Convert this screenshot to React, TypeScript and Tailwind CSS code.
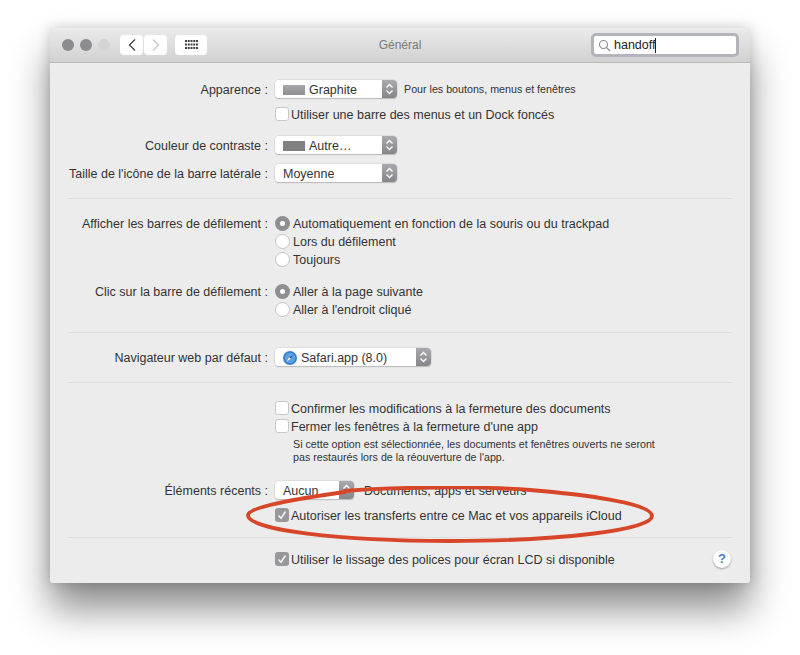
import type { ReactNode } from 'react';

function Row({ label, className = '', children }: { label?: string; className?: string; children: ReactNode }) {
  return (
    <div className={`flex h-[18px] items-center ${className}`}>
      <div className="w-[218px] shrink-0 pt-[2px] text-right whitespace-nowrap">{label}</div>
      <div className="ml-[7px] flex flex-1 items-center whitespace-nowrap">{children}</div>
    </div>
  );
}

function Divider({ className = '' }: { className?: string }) {
  return <div className={`mx-[18px] h-px bg-[#dddddd] ${className}`} />;
}

function Stepper({ upOnly }: { upOnly?: boolean }) {
  return (
    <span className="flex h-full w-[15px] items-center justify-center rounded-r-[4px] bg-gradient-to-b from-[#a9a9ad] to-[#87878b]">
      <svg width="9" height="14" viewBox="0 0 9 14" fill="none" stroke="#fff" strokeWidth="1.3">
        <path d="M1.5 5.5 4.5 2.5 7.5 5.5" />
        {!upOnly && <path d="M1.5 8.5 4.5 11.5 7.5 8.5" />}
      </svg>
    </span>
  );
}

function Select({ width, upOnly, children }: { width: string; upOnly?: boolean; children: ReactNode }) {
  return (
    <div className={`flex h-[18px] items-center justify-between rounded-[4px] bg-white shadow-[0_0_0_0.5px_#cfcfcf,0_1px_1px_rgba(0,0,0,0.3)] ${width}`}>
      <div className="flex items-center pt-[2px] pl-[8px]">{children}</div>
      <Stepper upOnly={upOnly} />
    </div>
  );
}

function Swatch({ color }: { color: string }) {
  return <span className={`mr-[4px] h-[10px] w-[22px] ${color}`} />;
}

function Checkbox({ checked, children, className = '' }: { checked?: boolean; children: ReactNode; className?: string }) {
  return (
    <div className={`flex items-center ${className}`}>
      {checked ? (
        <span className="flex h-[14px] w-[14px] items-center justify-center rounded-[3px] bg-[#98989c]">
          <svg width="10" height="10" viewBox="0 0 10 10" fill="none" stroke="#f2f2f2" strokeWidth="1.6">
            <path d="M1.5 5.5 4 8.2 8.5 1.5" />
          </svg>
        </span>
      ) : (
        <span className="h-[14px] w-[14px] rounded-[3px] border border-[#c8c8c8] bg-white" />
      )}
      <span className="ml-[2px] pt-[2px]">{children}</span>
    </div>
  );
}

function Radio({ checked, children }: { checked?: boolean; children: ReactNode }) {
  return (
    <div className="flex items-center">
      {checked ? (
        <span className="flex h-[15px] w-[15px] items-center justify-center rounded-full bg-[#8e8e93]">
          <span className="h-[5px] w-[5px] rounded-full bg-white" />
        </span>
      ) : (
        <span className="h-[15px] w-[15px] rounded-full border border-[#c4c4c4] bg-white" />
      )}
      <span className="ml-[3px] pt-[2px]">{children}</span>
    </div>
  );
}

function SafariIcon() {
  return (
    <svg width="14" height="14" viewBox="0 0 13 13" className="mr-[4px]">
      <circle cx="6.5" cy="6.5" r="6.5" fill="#3b7fcf" />
      <circle cx="6.5" cy="6.5" r="4.8" fill="#5aa2e6" />
      <path d="M9.5 3.5 7.3 7.3 3.5 9.5 5.7 5.7z" fill="#fff" />
      <path d="M9.5 3.5 7.3 7.3 5.7 5.7z" fill="#1f4f8f" />
    </svg>
  );
}

function TitleBar() {
  return (
    <div className="flex h-[35px] items-center border-b border-[#b9b9b9] bg-gradient-to-b from-[#ebebeb] to-[#d1d1d1] pl-[12px] pr-[11px]">
      <span className="h-[12px] w-[12px] rounded-full bg-[#8b8b90]" />
      <span className="ml-[6px] h-[12px] w-[12px] rounded-full bg-[#8b8b90]" />
      <span className="ml-[6px] h-[12px] w-[12px] rounded-full bg-[#d4d4d4]" />
      <div className="ml-[10px] flex h-[20px] w-[23px] items-center justify-center rounded-[4px] bg-white">
        <svg width="10" height="14" viewBox="0 0 10 14" fill="none" stroke="#444" strokeWidth="1.3">
          <path d="M8 1.5 2.5 7 8 12.5" />
        </svg>
      </div>
      <div className="ml-[1px] flex h-[20px] w-[23px] items-center justify-center rounded-[4px] bg-white">
        <svg width="10" height="14" viewBox="0 0 10 14" fill="none" stroke="#c8c8c8" strokeWidth="1.3">
          <path d="M2 1.5 7.5 7 2 12.5" />
        </svg>
      </div>
      <div className="ml-[8px] flex h-[20px] w-[32px] items-center justify-center rounded-[4px] bg-white">
        <svg width="13" height="10" viewBox="0 0 13 10" fill="#444">
          {[0, 2.75, 5.5, 8.25, 11].map((x) =>
            [0, 3.5, 7].map((y) => <rect key={`${x}-${y}`} x={x} y={y} width="2" height="2" />),
          )}
        </svg>
      </div>
      <div className="flex-1 pl-[2px] text-center text-[12px] text-[#7a7a7a]">Général</div>
      <div className="flex h-[24px] w-[148px] items-center rounded-[5px] border-[3px] border-[#b3b3ba] bg-white pl-[4px]">
        <svg width="13" height="13" viewBox="0 0 13 13" fill="none" stroke="#8a8a8a" strokeWidth="1.1">
          <circle cx="5.5" cy="5.5" r="4" />
          <path d="M8.5 8.5 12 12" />
        </svg>
        <span className="ml-[3px] text-[12.5px] text-[#222]">handoff</span>
        <span className="h-[15px] w-px bg-[#222]" />
      </div>
    </div>
  );
}

export default function App() {
  return (
    <div className="h-[655px] w-[800px] overflow-hidden bg-white pt-[28px] pl-[50px] font-['Liberation_Sans',Arial,sans-serif] text-[12.5px] text-[#333]">
      <div className="relative h-[555px] w-[700px] rounded-[3px] bg-[#ececec] shadow-[0_26px_38px_rgba(0,0,0,0.45),0_0_14px_rgba(0,0,0,0.18)]">
        <TitleBar />

        <Row label="Apparence :" className="mt-[17px]">
          <Select width="w-[122px]">
            <Swatch color="bg-gradient-to-b from-[#a8a8ac] to-[#8e8e92]" />
            Graphite
          </Select>
          <span className="ml-[7px] pt-px text-[10.7px]">Pour les boutons, menus et fenêtres</span>
        </Row>
        <Row className="mt-[7px]">
          <Checkbox>Utiliser une barre des menus et un Dock foncés</Checkbox>
        </Row>
        <Row label="Couleur de contraste :" className="mt-[13px]">
          <Select width="w-[122px]">
            <Swatch color="bg-[#808080]" />
            Autre…
          </Select>
        </Row>
        <Row label="Taille de l'icône de la barre latérale :" className="mt-[10px]">
          <Select width="w-[122px]">Moyenne</Select>
        </Row>

        <Divider className="mt-[16px]" />

        <Row label="Afficher les barres de défilement :" className="mt-[15px]">
          <Radio checked>Automatiquement en fonction de la souris ou du trackpad</Radio>
        </Row>
        <Row>
          <Radio>Lors du défilement</Radio>
        </Row>
        <Row>
          <Radio>Toujours</Radio>
        </Row>
        <Row label="Clic sur la barre de défilement :" className="mt-[14px]">
          <Radio checked>Aller à la page suivante</Radio>
        </Row>
        <Row>
          <Radio>Aller à l'endroit cliqué</Radio>
        </Row>

        <Divider className="mt-[14px]" />

        <Row label="Navigateur web par défaut :" className="mt-[15px]">
          <Select width="w-[156px]">
            <SafariIcon />
            Safari.app (8.0)
          </Select>
        </Row>

        <Divider className="mt-[16px]" />

        <Row className="mt-[16px]">
          <Checkbox>Confirmer les modifications à la fermeture des documents</Checkbox>
        </Row>
        <Row>
          <Checkbox>Fermer les fenêtres à la fermeture d'une app</Checkbox>
        </Row>
        <div className="mt-[3px] ml-[243px] text-[10.7px] leading-[13px]">
          Si cette option est sélectionnée, les documents et fenêtres ouverts ne seront
          <br />
          pas restaurés lors de la réouverture de l'app.
        </div>

        <Row label="Éléments récents :" className="mt-[17px]">
          <Select width="w-[79px]" upOnly>
            Aucun
          </Select>
          <span className="ml-[10px] pt-[2px]">Documents, apps et serveurs</span>
        </Row>
        <Row className="mt-[7px]">
          <Checkbox checked>Autoriser les transferts entre ce Mac et vos appareils iCloud</Checkbox>
        </Row>

        <Divider className="mt-[13px]" />

        <Row className="mt-[12px]">
          <Checkbox checked>Utiliser le lissage des polices pour écran LCD si disponible</Checkbox>
          <span className="mr-[19px] ml-auto flex h-[18px] w-[18px] items-center justify-center rounded-full bg-white text-[13px] font-bold text-[#4a7fc0] shadow-[0_1px_2px_rgba(0,0,0,0.35)]">
            ?
          </span>
        </Row>

        {/* annotation drawn over the screenshot, path is in page coordinates */}
        <svg width="420" height="60" viewBox="242 486 420 60" fill="none" className="absolute top-[458px] left-[192px]">
          <path
            d="M345 491C390 487 480 486 530 490C580 494 652 503 652 516C652 530 560 541 450 541C340 541 247 530 248 515C249 507 295 499 345 492"
            stroke="#d8462a"
            strokeWidth="3.8"
            strokeLinecap="round"
          />
        </svg>
      </div>
    </div>
  );
}
